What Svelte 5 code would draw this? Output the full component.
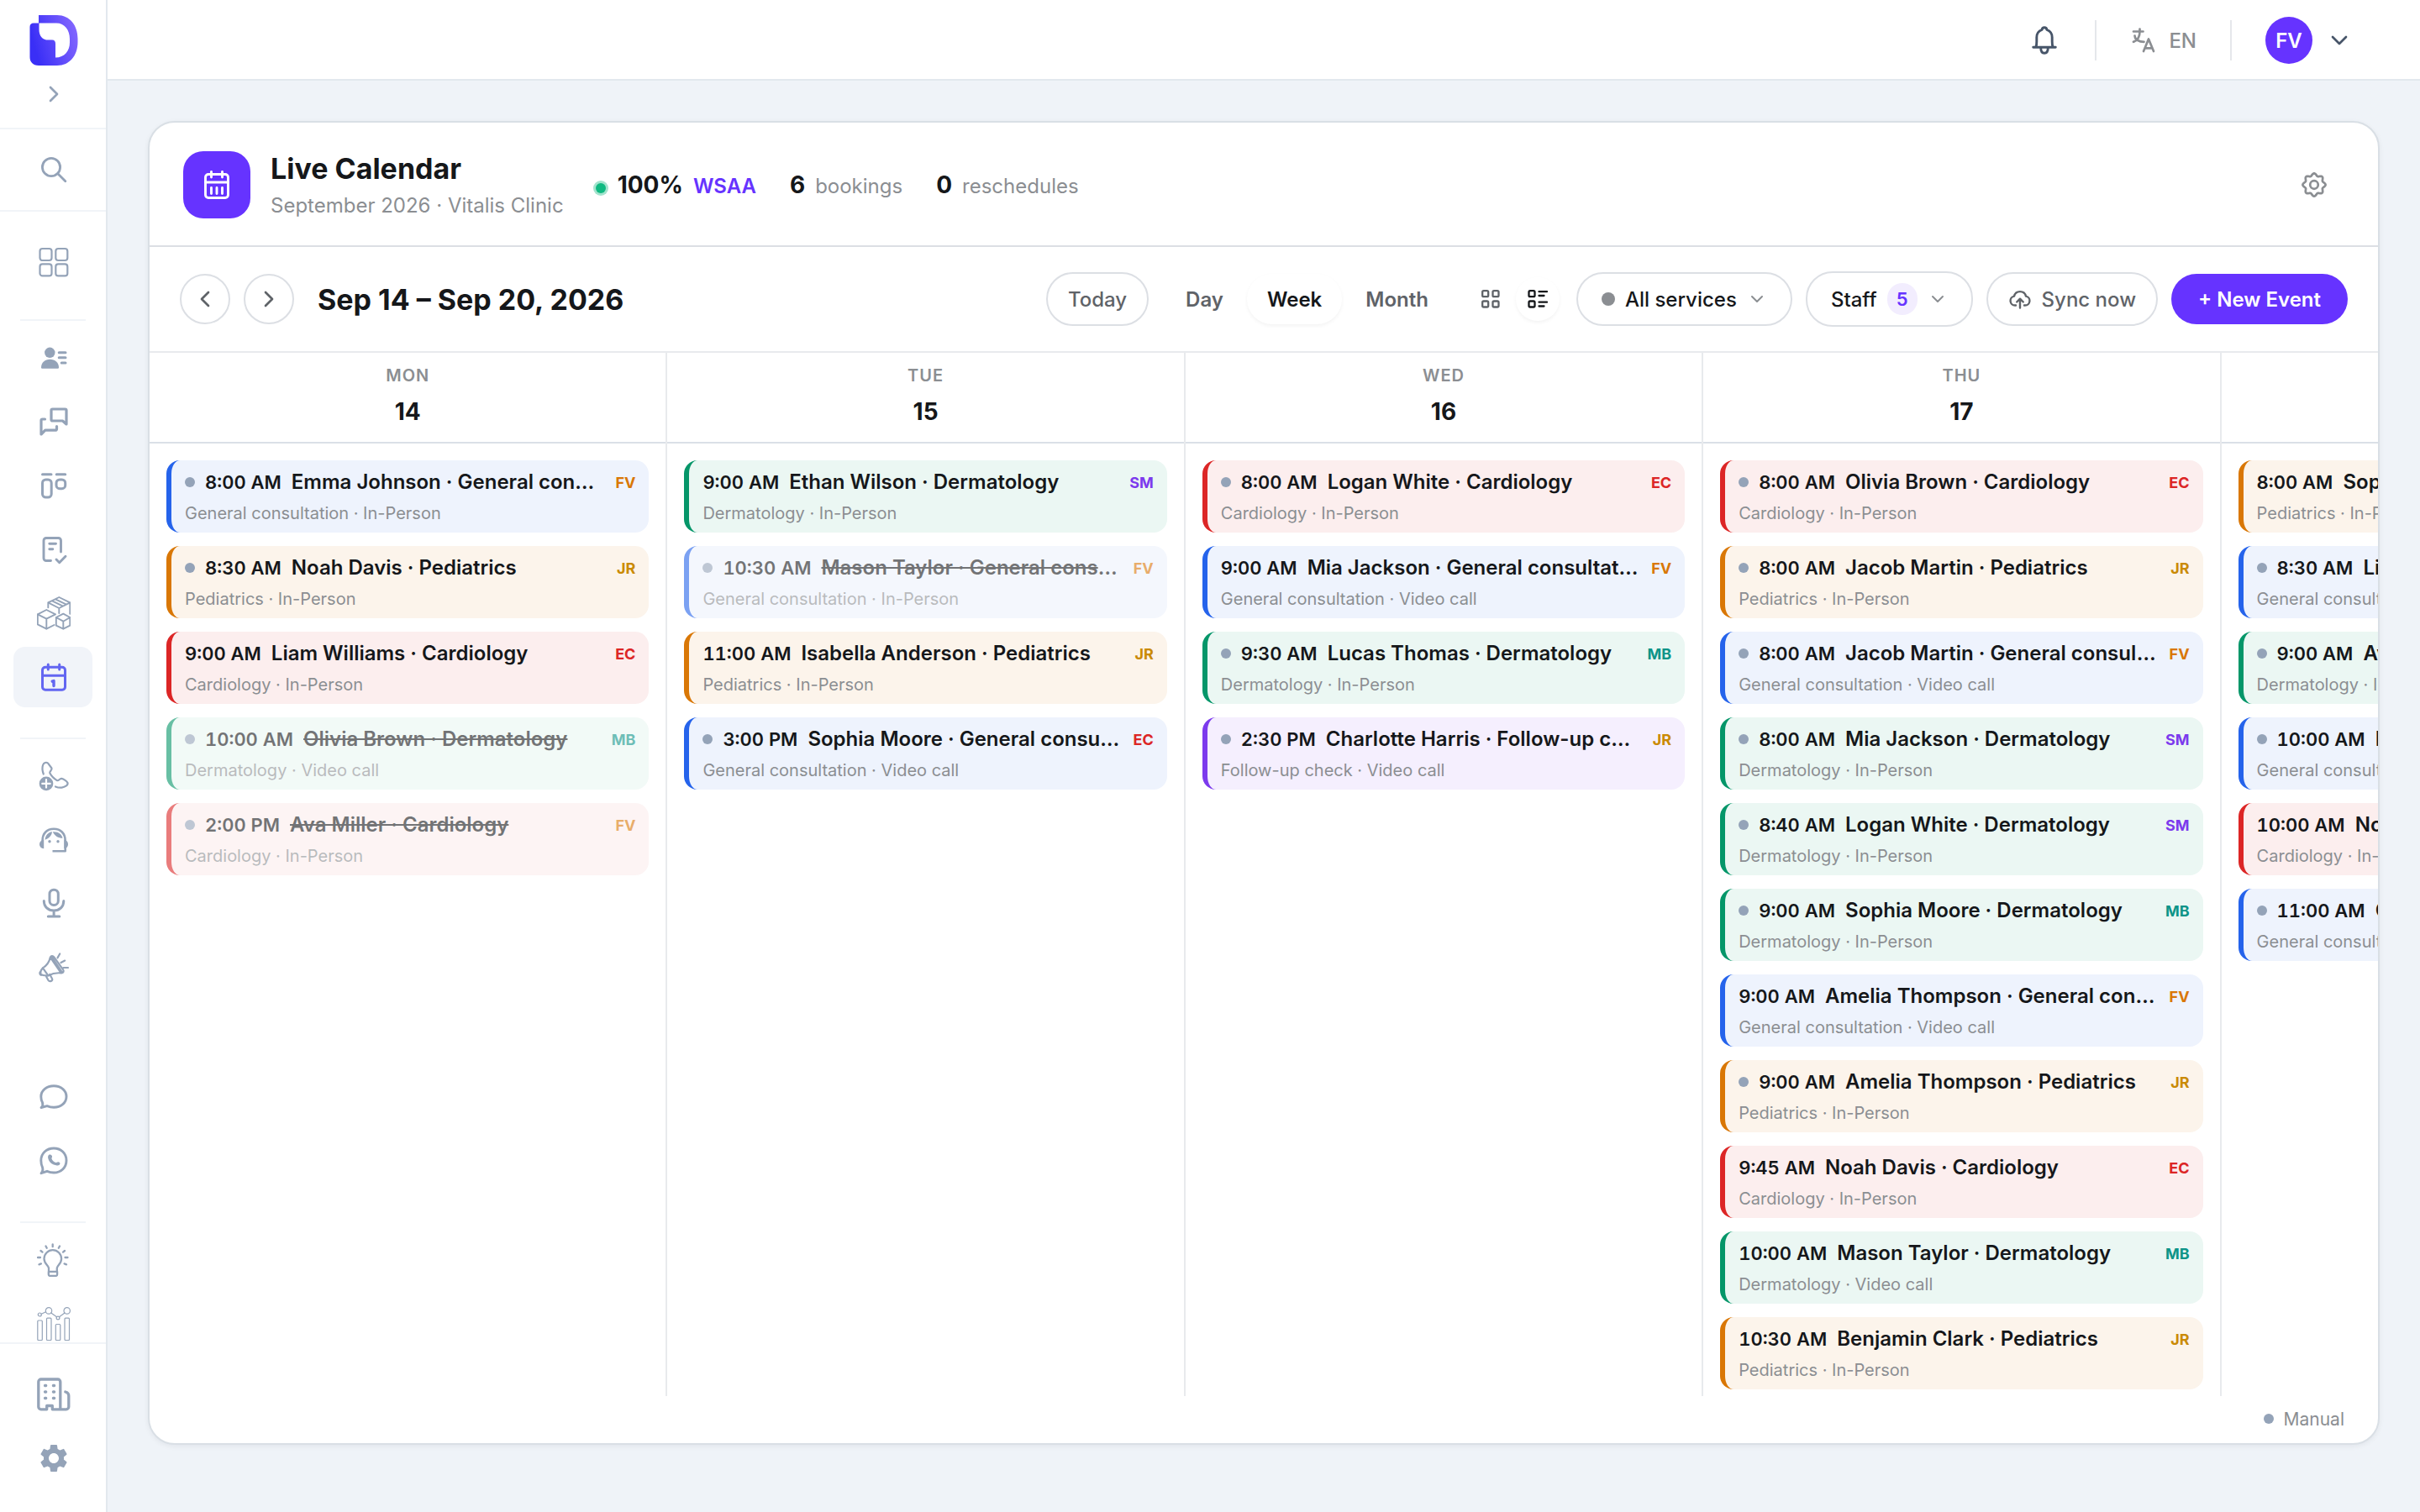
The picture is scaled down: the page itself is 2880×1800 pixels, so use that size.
<script lang="ts">
  type Service = 'general' | 'pediatrics' | 'cardiology' | 'dermatology' | 'followup';

  interface Booking {
    time: string;
    patient: string;
    service: Service;
    mode: string;
    staff: string;
    manual?: boolean;
    cancelled?: boolean;
  }

  const serviceNames: Record<Service, string> = {
    general: 'General consultation',
    pediatrics: 'Pediatrics',
    cardiology: 'Cardiology',
    dermatology: 'Dermatology',
    followup: 'Follow-up check',
  };

  const inPerson = 'In-Person';
  const video = 'Video call';

  const days: { name: string; date: number; bookings: Booking[] }[] = [
    {
      name: 'Mon',
      date: 14,
      bookings: [
        { time: '8:00 AM', patient: 'Emma Johnson', service: 'general', mode: inPerson, staff: 'FV', manual: true },
        { time: '8:30 AM', patient: 'Noah Davis', service: 'pediatrics', mode: inPerson, staff: 'JR', manual: true },
        { time: '9:00 AM', patient: 'Liam Williams', service: 'cardiology', mode: inPerson, staff: 'EC' },
        { time: '10:00 AM', patient: 'Olivia Brown', service: 'dermatology', mode: video, staff: 'MB', manual: true, cancelled: true },
        { time: '2:00 PM', patient: 'Ava Miller', service: 'cardiology', mode: inPerson, staff: 'FV', manual: true, cancelled: true },
      ],
    },
    {
      name: 'Tue',
      date: 15,
      bookings: [
        { time: '9:00 AM', patient: 'Ethan Wilson', service: 'dermatology', mode: inPerson, staff: 'SM' },
        { time: '10:30 AM', patient: 'Mason Taylor', service: 'general', mode: inPerson, staff: 'FV', manual: true, cancelled: true },
        { time: '11:00 AM', patient: 'Isabella Anderson', service: 'pediatrics', mode: inPerson, staff: 'JR' },
        { time: '3:00 PM', patient: 'Sophia Moore', service: 'general', mode: video, staff: 'EC', manual: true },
      ],
    },
    {
      name: 'Wed',
      date: 16,
      bookings: [
        { time: '8:00 AM', patient: 'Logan White', service: 'cardiology', mode: inPerson, staff: 'EC', manual: true },
        { time: '9:00 AM', patient: 'Mia Jackson', service: 'general', mode: video, staff: 'FV' },
        { time: '9:30 AM', patient: 'Lucas Thomas', service: 'dermatology', mode: inPerson, staff: 'MB', manual: true },
        { time: '2:30 PM', patient: 'Charlotte Harris', service: 'followup', mode: video, staff: 'JR', manual: true },
      ],
    },
    {
      name: 'Thu',
      date: 17,
      bookings: [
        { time: '8:00 AM', patient: 'Olivia Brown', service: 'cardiology', mode: inPerson, staff: 'EC', manual: true },
        { time: '8:00 AM', patient: 'Jacob Martin', service: 'pediatrics', mode: inPerson, staff: 'JR', manual: true },
        { time: '8:00 AM', patient: 'Jacob Martin', service: 'general', mode: video, staff: 'FV', manual: true },
        { time: '8:00 AM', patient: 'Mia Jackson', service: 'dermatology', mode: inPerson, staff: 'SM', manual: true },
        { time: '8:40 AM', patient: 'Logan White', service: 'dermatology', mode: inPerson, staff: 'SM', manual: true },
        { time: '9:00 AM', patient: 'Sophia Moore', service: 'dermatology', mode: inPerson, staff: 'MB', manual: true },
        { time: '9:00 AM', patient: 'Amelia Thompson', service: 'general', mode: video, staff: 'FV' },
        { time: '9:00 AM', patient: 'Amelia Thompson', service: 'pediatrics', mode: inPerson, staff: 'JR', manual: true },
        { time: '9:45 AM', patient: 'Noah Davis', service: 'cardiology', mode: inPerson, staff: 'EC' },
        { time: '10:00 AM', patient: 'Mason Taylor', service: 'dermatology', mode: video, staff: 'MB' },
        { time: '10:30 AM', patient: 'Benjamin Clark', service: 'pediatrics', mode: inPerson, staff: 'JR' },
      ],
    },
    {
      name: 'Fri',
      date: 18,
      bookings: [
        { time: '8:00 AM', patient: 'Sophia Moore', service: 'pediatrics', mode: inPerson, staff: 'JR' },
        { time: '8:30 AM', patient: 'Liam Williams', service: 'general', mode: inPerson, staff: 'FV', manual: true },
        { time: '9:00 AM', patient: 'Ava Miller', service: 'dermatology', mode: inPerson, staff: 'MB', manual: true },
        { time: '10:00 AM', patient: 'Isabella Anderson', service: 'general', mode: inPerson, staff: 'FV', manual: true },
        { time: '10:00 AM', patient: 'Noah Davis', service: 'cardiology', mode: inPerson, staff: 'EC' },
        { time: '11:00 AM', patient: 'Charlotte Harris', service: 'general', mode: video, staff: 'FV', manual: true },
      ],
    },
  ];

  const views = ['Day', 'Week', 'Month'];
  let view = $state('Week');
  let layout = $state('list');

  // eight soft teeth around the centre of a 40 x 40 box
  let cog = '';
  for (let a = 0; a < 360; a += 5) {
    const t = (a * Math.PI) / 180;
    const r = 12.2 + 1.4 * Math.cos(8 * t);
    cog += `${a ? 'L' : 'M'}${(20 + r * Math.cos(t)).toFixed(2)} ${(20 + r * Math.sin(t)).toFixed(2)}`;
  }
  cog += 'Z';
</script>

{#snippet dashboard()}
  <svg class="icon" viewBox="0 0 40 40" stroke-width="2.2">
    <rect x="3.5" y="4" width="14" height="14" rx="3" /><rect x="22.3" y="4" width="14" height="14" rx="3" />
    <rect x="3.5" y="22.4" width="14" height="14" rx="3" /><rect x="22.3" y="22.4" width="14" height="14" rx="3" />
  </svg>
{/snippet}

{#snippet contacts()}
  <svg class="icon" viewBox="0 0 40 40" stroke-width="3">
    <g class="solid">
      <circle cx="15.3" cy="13.8" r="6.2" />
      <path d="M5 31.5C5 25.5 9.5 21.7 15.5 21.7S26 25.5 26 31.5a1.2 1.2 0 0 1-1.2 1.2H6.2A1.2 1.2 0 0 1 5 31.5Z" />
    </g>
    <path d="M26.2 13.8h7.8M26.2 19.8h7.8M29.2 26h4.8" />
  </svg>
{/snippet}

{#snippet conversations()}
  <svg class="icon" viewBox="0 0 40 40" stroke-width="3.2">
    <path d="M18.5 5h15A1.5 1.5 0 0 1 35 6.5V23l-4.5-4h-12a1.5 1.5 0 0 1-1.5-1.5v-11A1.5 1.5 0 0 1 18.5 5Z" />
    <path d="M9.5 17h-3A1.5 1.5 0 0 0 5 18.5V35l4.8-4.8H22a1.5 1.5 0 0 0 1.5-1.5V25.5" />
  </svg>
{/snippet}

{#snippet board()}
  <svg class="icon" viewBox="0 0 40 40" stroke-width="3">
    <path d="M6.5 6.7h10.5M23.2 6.7h10.5" />
    <rect x="6.5" y="13" width="10.7" height="21" rx="4" /><rect x="23" y="13" width="10.7" height="10.7" rx="4" />
  </svg>
{/snippet}

{#snippet tasks()}
  <svg class="icon" viewBox="0 0 40 40" stroke-width="2.9">
    <path d="M16.5 33.5H11A3 3 0 0 1 8 30.5v-21a3 3 0 0 1 3-3h14.5a3 3 0 0 1 3 3V23" />
    <path d="M14.8 13.3h7.7M14.8 19.7h4M23 32l3.7 3.7 7.3-7.5" />
  </svg>
{/snippet}

{#snippet inventory()}
  <svg class="icon" viewBox="0 0 40 40" stroke-width="1.9">
    <path d="M13.3 13.3v-6l13-6.3 13 6.3v13.4M13.3 7.3l13 6.7 13-6.7M26.3 14v6M22 3.3l13 6.3M18 5.3l13 6.3" />
    <path d="M20.5 34l-9.2 4.7-10.5-5.4v-12l10.5-5.3L22 21.3l-10.7 5.4L.8 21.3M11.3 26.7v12" />
    <path d="M22.8 25l8.5-4.3 8 4.3v9.7l-8 4-8.5-4ZM22.8 25l8.5 4.7 8-4.7M31.3 29.7v9" />
  </svg>
{/snippet}

{#snippet calendar()}
  <svg class="icon" viewBox="0 0 40 40" stroke-width="3">
    <rect x="6.5" y="8.2" width="27" height="27" rx="3.5" />
    <path d="M6.5 18.3h27M13.3 5v6M26.7 5v6" /><path d="M18.2 25.2l1.8-.7v6" stroke-width="3.4" />
  </svg>
{/snippet}

{#snippet calls()}
  <svg class="icon" viewBox="0 0 40 40" stroke-width="2.2">
    <path d="M7.8 17.5C6.5 14 6 10 7 7s4-4.3 6.3-2.2L17.5 10.5c1 1.8-3 4-2.2 5.8 1.5 3 5.5 7 8.5 8.8 2 1 3-2.5 5.5-2.2 2.5.5 6.2 3 7.2 5 .8 3-3.5 5.3-7 5.7-3 .3-5.5-.3-7.5-1.2" />
    <circle class="solid" cx="11" cy="28.9" r="8.3" />
    <path class="cut" d="M11 24.2v9.4M6.3 28.9h9.4" />
  </svg>
{/snippet}

{#snippet agent()}
  <svg class="icon" viewBox="0 0 40 40" stroke-width="2.6">
    <path d="M6.5 21C6.5 12 12 6.8 20 6.8S33.7 12 33.7 21v12.2H18.5" stroke-linecap="butt" />
    <g class="solid">
      <path d="M8.2 19.5v10.7C5 30.2 3 27.8 3 25s2-5 5.2-5.5ZM32.3 19.5v10.7c3 0 4.7-2.4 4.7-5.2s-1.7-5-4.7-5.5Z" />
      <path d="M9.5 19.8c.5-5.3 3.5-9 8.5-9.6-.5 4.5-3.5 7.8-8.5 9.6ZM18.8 10.2c6.5-.5 11 3 11.7 7.6-5 0-9.5-2.6-11.7-7.6Z" />
      <circle cx="15" cy="21.7" r="1.7" /><circle cx="25" cy="21.7" r="1.7" />
    </g>
  </svg>
{/snippet}

{#snippet mic()}
  <svg class="icon" viewBox="0 0 40 40" stroke-width="3">
    <rect x="15" y="3.2" width="10.3" height="18.3" rx="5" />
    <path d="M8.3 16.5c0 7 5 11.5 11.8 11.5s11.7-4.5 11.7-11.5M20.1 28v7M13.3 35h13.5" />
  </svg>
{/snippet}

{#snippet campaigns()}
  <svg class="icon" viewBox="0 0 40 40" stroke-width="2.2">
    <path d="M15.8 7.7c1-2 3.2-2 4.5-.3l11 15.3c1.2 2-.3 4-2.6 3.7ZM15.8 7.7c-1 5-4 9.5-8.8 12.6M28.7 26.4c-6-.6-10 .2-15.4 3M7 20.3l6.3 9.1M17.5 7.2 30 25.5" />
    <path d="M7 20.3c-2 2-3.2 4.6-2.8 7.3 2.3 1.7 5.3 2.2 9.1 1.8M4.2 24.5c-1.5 1.5-1 4 .8 4.3M10.5 29.5l3 5.5c1.5 2.5 6 .5 4.5-2l-2.8-5" />
    <path d="M24.5 8.3l2.7-4.8M28.5 14l4.7-2.4M31.3 20h5.7" />
  </svg>
{/snippet}

{#snippet chat()}
  <svg class="icon" viewBox="0 0 40 40" stroke-width="2.9">
    <path d="M20 6.8c8.5 0 15 5.3 15 12.7s-6.5 12.8-15 12.8c-2.8 0-5.5-.6-8-1.7l-7 1.9c1.8-1.5 2.3-3.5 1.5-6-1.2-2-1.7-4.4-1.7-7C4.8 12.1 11.5 6.8 20 6.8Z" />
  </svg>
{/snippet}

{#snippet whatsapp()}
  <svg class="icon" viewBox="0 0 40 40" stroke-width="2.9">
    <path d="M20 5c8.5 0 15 6 15 14.5S28.5 34 20 34c-2.8 0-5.5-.6-8-1.7l-7 2.4c1.8-1.8 2.3-4.2 1.5-7-1.2-2.5-1.7-5-1.7-8.2C4.8 11 11.5 5 20 5Z" />
    <path class="solid" d="M14.2 12.8c1.3-.8 3-.2 3.7 1.3.6 1.4-.8 2.5-.4 3.4.9 2.2 2.5 3.7 4.7 4.5 1 .4 1.7-1 3.3-.7 1.8.4 2.7 1.8 1.4 3.1-1.4 1.4-4.5 1.3-7 .2-3.5-1.5-6-4.5-6.7-7.9-.3-1.6 0-3.1 1-3.9Z" />
  </svg>
{/snippet}

{#snippet tips()}
  <svg class="icon" viewBox="0 0 40 40" stroke-width="2.3">
    <path d="M14 33v-3.5c-.5-3-5.5-5.2-5.5-11a10.3 10.3 0 0 1 20.6 0c0 5.8-4.8 8-5.3 11V33M13.8 33.8h10.3v3.5c0 1-.7 1.6-1.6 1.6h-7.1c-.9 0-1.6-.6-1.6-1.6Z" />
    <path d="M18.7 1.3v2.9M10.5 3.5l1.2 2.2M27 3.5l-1.2 2.2M4.5 9l2 1.6M33 9l-2 1.6M1 17h3M33.5 17h3M2.5 25.3l2.4-.9M35 25.3l-2.4-.9" />
  </svg>
{/snippet}

{#snippet reports()}
  <svg class="icon" viewBox="0 0 40 40" stroke-width="1.2">
    <rect x=".8" y="16" width="5.5" height="23.5" rx="1" /><rect x="11.5" y="13.2" width="5.5" height="26.3" rx="1" />
    <rect x="22.3" y="20.5" width="5.5" height="19" rx="1" /><rect x="33" y="13.2" width="5.5" height="26.3" rx="1" />
    <circle cx="3.3" cy="9" r="2" /><circle cx="14" cy="4.4" r="3.7" /><circle cx="25" cy="13" r="1.9" /><circle cx="35.7" cy="4.4" r="3.7" />
    <path d="M5.2 8.2l5.4-2.4M16.8 6.9l6.7 4.9M26.5 11.7l6.5-4.8" />
  </svg>
{/snippet}

{#snippet clinic()}
  <svg class="icon" viewBox="0 0 40 40" stroke-width="3.3">
    <path d="M11.7 37.8H4.8A3 3 0 0 1 1.8 34.8V5a3 3 0 0 1 3-3h20a3 3 0 0 1 3 3v32.8H18.3V33.5h-6.6v4.3M27.8 37.8h7a3 3 0 0 0 3-3V21.5c0-2.5-1.8-4-4-4.5" />
    <path d="M9.5 9.5h1.2M19.4 9.5h1.2M9.5 17h1.2M19.4 17h1.2M9.5 24.5h1.2M19.4 24.5h1.2" />
  </svg>
{/snippet}

{#snippet settings()}
  <svg class="icon" viewBox="0 0 24 24">
    <path class="solid" d="M19.14 12.94c.04-.3.06-.61.06-.94 0-.32-.02-.64-.07-.94l2.03-1.58a.49.49 0 0 0 .12-.61l-1.92-3.32a.488.488 0 0 0-.59-.22l-2.39.96c-.5-.38-1.03-.7-1.62-.94l-.36-2.54a.484.484 0 0 0-.48-.41h-3.84c-.24 0-.43.17-.47.41l-.36 2.54c-.59.24-1.13.57-1.62.94l-2.39-.96c-.22-.08-.47 0-.59.22L2.74 8.87c-.12.21-.08.47.12.61l2.03 1.58c-.05.3-.09.63-.09.94s.02.64.07.94l-2.03 1.58a.49.49 0 0 0-.12.61l1.92 3.32c.12.22.37.29.59.22l2.39-.96c.5.38 1.03.7 1.62.94l.36 2.54c.05.24.24.41.48.41h3.84c.24 0 .44-.17.47-.41l.36-2.54c.59-.24 1.13-.56 1.62-.94l2.39.96c.22.08.47 0 .59-.22l1.92-3.32c.12-.22.07-.47-.12-.61l-2.01-1.58ZM12 15.6c-1.98 0-3.6-1.62-3.6-3.6s1.62-3.6 3.6-3.6 3.6 1.62 3.6 3.6-1.62 3.6-3.6 3.6Z" />
  </svg>
{/snippet}

{#snippet chevron()}
  <svg viewBox="0 0 24 24" stroke-width="2"><path d="M6 9l6 6 6-6" /></svg>
{/snippet}

<div class="app">
  <aside class="sidebar">
    <div class="brand">
      <svg class="logo" viewBox="0 0 58 60" role="img" aria-label="Home">
        <defs>
          <linearGradient id="brand" x1="0" x2="1" y1=".3" y2="0">
            <stop offset="0" stop-color="#3a2ff6" />
            <stop offset="1" stop-color="#8a6cff" />
          </linearGradient>
        </defs>
        <path fill="url(#brand)" fill-rule="evenodd" d="M11 0h22c15 0 24.5 12 24.5 28v4C57.5 48 48 60 33 60H11C4 60 .5 55.5 .5 50V14c0-3 1.7-4.6 4.5-4.6h6ZM11.5 9.4V17c0 8 4 12.6 11 12.6h4.5c2.8 0 4 1.8 4 4.4v16.5c11 0 17-8 17-18v-4c0-11-6-19.1-16-19.1Z" />
      </svg>
      <button class="expand" aria-label="Expand menu">{@render chevron()}</button>
    </div>
    <button class="search" aria-label="Search">
      <svg class="icon" viewBox="0 0 40 40" stroke-width="2.8"><circle cx="17" cy="17" r="10.6" /><path d="M24.8 24.8l9 9" /></svg>
    </button>

    <nav class="menu">
      <div class="group first">
        <a href="#dashboard" aria-label="Dashboard">{@render dashboard()}</a>
      </div>
      <hr />
      <div class="group">
        <a href="#contacts" aria-label="Contacts">{@render contacts()}</a>
        <a href="#conversations" aria-label="Conversations">{@render conversations()}</a>
        <a href="#board" aria-label="Board">{@render board()}</a>
        <a href="#tasks" aria-label="Tasks">{@render tasks()}</a>
        <a href="#inventory" aria-label="Inventory">{@render inventory()}</a>
        <a href="#calendar" class="active" aria-label="Calendar">{@render calendar()}</a>
      </div>
      <hr />
      <div class="group agents">
        <a href="#calls" aria-label="Calls">{@render calls()}</a>
        <a href="#agent" aria-label="Agent">{@render agent()}</a>
        <a href="#voice" aria-label="Voice">{@render mic()}</a>
        <a href="#campaigns" aria-label="Campaigns">{@render campaigns()}</a>
      </div>
      <div class="group">
        <a href="#chat" aria-label="Chat">{@render chat()}</a>
        <a href="#whatsapp" aria-label="WhatsApp">{@render whatsapp()}</a>
      </div>
      <hr />
      <div class="group">
        <a href="#tips" aria-label="Tips">{@render tips()}</a>
        <a href="#reports" aria-label="Reports">{@render reports()}</a>
      </div>
    </nav>

    <div class="menu-footer">
      <a href="#clinic" aria-label="Clinic">{@render clinic()}</a>
      <a href="#settings" aria-label="Settings">{@render settings()}</a>
    </div>
  </aside>

  <div class="page">
    <header class="topbar">
      <button class="bell" aria-label="Notifications">
        <svg class="icon" viewBox="0 0 40 40" stroke-width="2.9">
          <path d="M6.7 28.3h26.6M9.8 28c.8-1.5 1-3.5 1-6.5v-5c0-4.5 2-7.5 6.2-9C17.3 5.5 18.3 4.7 20 4.7s2.7.8 3 2.8c4.2 1.5 6.2 4.5 6.2 9v5c0 3 .2 5 1 6.5M15.7 28.5c0 4.5 1.7 6.8 4.3 6.8s4.3-2.3 4.3-6.8" />
        </svg>
      </button>
      <span class="rule"></span>
      <button class="lang">
        <svg viewBox="0 0 32 32" stroke-width="2.7">
          <path d="M4 5.5h11.5M11.5 2.5v3c0 5.5-2.5 10.5-7.5 12.3M5.5 10.5c0 4.5 5 7.3 11 7.3" />
          <path d="M16 29l6-14.5L28 29M18 25.3h8" />
        </svg>
        EN
      </button>
      <span class="rule"></span>
      <button class="account" aria-label="Account">
        <span class="avatar">FV</span>
        {@render chevron()}
      </button>
    </header>

    <main>
      <section class="card">
        <header class="card-head">
          <div class="badge">
            <svg class="icon" viewBox="0 0 40 40" stroke-width="2.9">
              <rect x="6.5" y="7.5" width="27" height="28" rx="3.5" />
              <path d="M6.5 17h27M13.5 4.5v6.5M26.5 4.5v6.5M13.5 23.5v7M20 23.5v7M26.5 23.5v7" />
            </svg>
          </div>
          <div class="heading">
            <h1>Live Calendar</h1>
            <p>September 2026 · Vitalis Clinic</p>
          </div>
          <ul class="stats">
            <li><i class="live"></i><strong>100%</strong><b>WSAA</b></li>
            <li><strong>6</strong><span>bookings</span></li>
            <li><strong>0</strong><span>reschedules</span></li>
          </ul>
          <button class="cog" aria-label="Calendar settings">
            <svg class="icon" viewBox="0 0 40 40" stroke-width="2.7"><path d={cog} /><circle cx="20" cy="20" r="4.8" /></svg>
          </button>
        </header>

        <div class="toolbar">
          <button class="step prev" aria-label="Previous week">{@render chevron()}</button>
          <button class="step next" aria-label="Next week">{@render chevron()}</button>
          <h2>Sep 14 – Sep 20, 2026</h2>
          <button class="pill">Today</button>
          <div class="segment">
            {#each views as name}
              <button class:on={view === name} onclick={() => (view = name)}>{name}</button>
            {/each}
          </div>
          <div class="segment icons">
            <button class:on={layout === 'grid'} aria-label="Grid" onclick={() => (layout = 'grid')}>
              <svg viewBox="0 0 28 28" stroke-width="2.3">
                <rect x="4.2" y="4.2" width="7" height="7" rx="1.5" /><rect x="16.5" y="4.2" width="7" height="7" rx="1.5" />
                <rect x="4.2" y="16.5" width="7" height="7" rx="1.5" /><rect x="16.5" y="16.5" width="7" height="7" rx="1.5" />
              </svg>
            </button>
            <button class:on={layout === 'list'} aria-label="List" onclick={() => (layout = 'list')}>
              <svg viewBox="0 0 28 28" stroke-width="2.3">
                <rect x="3.5" y="4.2" width="7" height="7" rx="1.5" /><rect x="3.5" y="16.5" width="7" height="7" rx="1.5" />
                <path d="M15.5 5.2h9.5M15.5 10h6M15.5 17.7h9.5M15.5 22.5h6" />
              </svg>
            </button>
          </div>
          <label class="pill dark">
            <i class="dot"></i>
            <select aria-label="Service">
              <option>All services</option>
            </select>
            {@render chevron()}
          </label>
          <button class="pill dark staff">Staff <span class="count">5</span>{@render chevron()}</button>
          <button class="pill">
            <svg viewBox="0 0 28 28" stroke-width="2.4">
              <path d="M9 21.5H8a5.5 5.5 0 0 1-1-10.9 7.2 7.2 0 0 1 14 0 5.5 5.5 0 0 1-1 10.9h-1M14 24.5V14M10.2 17.5L14 13.7l3.8 3.8" />
            </svg>
            Sync now
          </button>
          <button class="create">+ New Event</button>
        </div>

        <div class="scroller">
          <div class="week">
            {#each days as day}
              <section class="day">
                <header>
                  <span>{day.name}</span>
                  <b>{day.date}</b>
                </header>
                <div class="bookings">
                  {#each day.bookings as b}
                    <article class={`booking ${b.service}`} class:cancelled={b.cancelled}>
                      <div class="line">
                        {#if b.manual}<i class="dot"></i>{/if}
                        <time>{b.time}</time>
                        <span class="title">{b.patient} · {serviceNames[b.service]}</span>
                        <span class={`initials ${b.staff.toLowerCase()}`}>{b.staff}</span>
                      </div>
                      <p>{serviceNames[b.service]} · {b.mode}</p>
                    </article>
                  {/each}
                </div>
              </section>
            {/each}
          </div>
        </div>

        <footer class="legend"><i class="dot"></i>Manual</footer>
      </section>
    </main>
  </div>
</div>

<style>
  :global(body) {
    margin: 0;
    font-family: Inter, 'Liberation Sans', sans-serif;
    color: #15171a;
    background: #eff3f8;
  }
  * {
    box-sizing: border-box;
  }
  button,
  select {
    font: inherit;
    color: inherit;
    background: none;
    border: 0;
    padding: 0;
  }
  h1,
  h2,
  p,
  ul {
    margin: 0;
    padding: 0;
  }
  svg {
    display: block;
    flex: none;
    fill: none;
    stroke: currentColor;
    stroke-linecap: round;
    stroke-linejoin: round;
  }
  .icon {
    width: 40px;
    height: 40px;
  }
  .solid {
    fill: currentColor;
    stroke: none;
  }
  .cut {
    stroke: #fff;
  }
  .app {
    display: flex;
    height: 100vh;
  }

  /* sidebar */
  .sidebar {
    flex: none;
    width: 128px;
    display: flex;
    flex-direction: column;
    background: #fff;
    border-right: 2px solid #e2e8ee;
    color: #94a3b8;
  }
  .brand {
    display: flex;
    flex-direction: column;
    align-items: center;
    gap: 18px;
    height: 154px;
    padding: 18px 0 0 2px;
    border-bottom: 2px solid #f1f4f8;
  }
  .logo {
    width: 58px;
    height: 60px;
    stroke: none;
  }
  .expand svg {
    width: 32px;
    height: 32px;
    transform: rotate(-90deg);
  }
  .search {
    display: grid;
    place-items: center;
    height: 98px;
    padding-left: 2px;
    border-bottom: 2px solid #f1f4f8;
  }
  .menu {
    flex: 1;
    min-height: 0;
    overflow: hidden;
    padding: 24px 16px 0;
  }
  .group {
    display: flex;
    flex-direction: column;
    gap: 4px;
    margin-bottom: 36px;
  }
  .group.first {
    margin-bottom: 32px;
  }
  .group.agents {
    margin-bottom: 82px;
  }
  hr {
    height: 2px;
    margin: 0 8px 8px;
    border: 0;
    background: #f1f4f8;
  }
  .sidebar a {
    display: grid;
    place-items: center;
    height: 72px;
    padding-left: 2px;
    border-radius: 14px;
    color: inherit;
  }
  .sidebar a.active {
    background: #f1f4f9;
    color: #6366f1;
  }
  .menu-footer {
    display: flex;
    flex-direction: column;
    gap: 4px;
    padding: 24px 16px 28px;
    border-top: 2px solid #f1f4f8;
  }

  /* top bar */
  .page {
    flex: 1;
    min-width: 0;
    display: flex;
    flex-direction: column;
  }
  .topbar {
    display: flex;
    align-items: center;
    justify-content: flex-end;
    gap: 40px;
    height: 96px;
    padding: 2px 80px 0 0;
    background: #fff;
    border-bottom: 2px solid #e2e8ee;
  }
  .rule {
    width: 2px;
    height: 48px;
    background: #e5e7eb;
  }
  .bell {
    color: #475569;
  }
  .lang {
    display: flex;
    align-items: center;
    gap: 14px;
    font-size: 24px;
    font-weight: 500;
    color: #8b8e92;
  }
  .lang svg {
    width: 32px;
    height: 32px;
  }
  .account {
    display: flex;
    align-items: center;
    gap: 16px;
    color: #475569;
  }
  .account svg {
    width: 32px;
    height: 32px;
  }
  .avatar {
    display: grid;
    place-items: center;
    width: 56px;
    height: 56px;
    border-radius: 50%;
    background: #6633ff;
    color: #fff;
    font-size: 24px;
    font-weight: 600;
  }

  /* card */
  main {
    flex: 1;
    min-height: 0;
    padding: 48px 48px 80px;
  }
  .card {
    display: flex;
    flex-direction: column;
    height: 100%;
    overflow: hidden;
    background: #fff;
    border: 2px solid #d9dfe5;
    border-radius: 32px;
    box-shadow: 0 2px 6px rgba(15, 23, 42, 0.06);
  }
  .card-head {
    display: flex;
    align-items: center;
    height: 148px;
    padding: 2px 40px 0;
    border-bottom: 2px solid #dcdfe4;
  }
  .badge {
    display: grid;
    place-items: center;
    width: 80px;
    height: 80px;
    margin-right: 24px;
    border-radius: 24px;
    background: #6633ff;
    color: #fff;
  }
  .heading {
    padding-top: 2px;
  }
  h1 {
    font-size: 34px;
    line-height: 44px;
    font-weight: 700;
  }
  .heading p {
    margin-top: 4px;
    font-size: 24px;
    line-height: 36px;
    color: #8b8e92;
  }
  .stats {
    display: flex;
    gap: 40px;
    margin-left: 38px;
    padding-top: 2px;
    list-style: none;
  }
  .stats li {
    display: flex;
    align-items: baseline;
    gap: 12px;
    font-size: 24px;
    line-height: 36px;
    color: #8b8e92;
  }
  .stats strong {
    font-size: 28px;
    font-weight: 700;
    color: #15171a;
  }
  .stats b {
    font-weight: 600;
    color: #6633ff;
  }
  .live {
    width: 12px;
    height: 12px;
    margin-right: 2px;
    border-radius: 50%;
    background: #10b981;
    box-shadow: 0 0 0 3px #a3e3cd;
  }
  .cog {
    display: grid;
    place-items: center;
    width: 72px;
    height: 72px;
    margin-left: auto;
    color: #8b8e92;
  }

  /* toolbar */
  .toolbar {
    display: flex;
    align-items: center;
    gap: 16px;
    height: 126px;
    padding: 0 36px;
    border-bottom: 2px solid #e8eaed;
    color: #5f6368;
    font-size: 24px;
    white-space: nowrap;
  }
  .toolbar h2 {
    flex: 1;
    margin-left: 12px;
    font-size: 34px;
    font-weight: 700;
    color: #15171a;
  }
  .step {
    display: grid;
    place-items: center;
    width: 60px;
    height: 60px;
    border: 2px solid #dcdfe4;
    border-radius: 50%;
  }
  .step svg {
    width: 32px;
    height: 32px;
  }
  .prev svg {
    transform: rotate(90deg);
  }
  .next svg {
    transform: rotate(-90deg);
  }
  .pill {
    display: flex;
    align-items: center;
    gap: 12px;
    height: 64px;
    padding: 0 24px;
    border: 2px solid #dcdfe4;
    border-radius: 32px;
    font-weight: 500;
  }
  .pill svg {
    width: 28px;
    height: 28px;
  }
  .pill.dark {
    padding: 0 28px;
    color: #15171a;
  }
  .pill.dark select {
    appearance: none;
  }
  .pill.dark svg {
    width: 24px;
    height: 24px;
    color: #8b8e92;
  }
  .pill.dark .dot {
    width: 16px;
    height: 16px;
    background: #8b8e92;
  }
  .pill.staff {
    height: 66px;
  }
  .count {
    display: grid;
    place-items: center;
    width: 36px;
    height: 38px;
    border-radius: 20px;
    background: #f2edfe;
    color: #6633ff;
    font-size: 22px;
    font-weight: 600;
  }
  .create {
    height: 60px;
    padding: 0 32px;
    border-radius: 30px;
    background: #6633ff;
    color: #fff;
    font-weight: 600;
  }
  .segment {
    display: flex;
    gap: 4px;
    padding: 4px;
  }
  .segment button {
    display: grid;
    place-items: center;
    height: 60px;
    padding: 0 24px;
    border-radius: 30px;
    font-weight: 600;
  }
  .segment .on {
    color: #15171a;
    box-shadow: 0 2px 4px rgba(0, 0, 0, 0.05);
  }
  .segment.icons button {
    width: 52px;
    height: 52px;
    padding: 0;
  }
  .segment svg {
    width: 28px;
    height: 28px;
  }

  /* week */
  .scroller {
    flex: 1;
    min-height: 0;
    overflow: hidden;
  }
  .week {
    display: grid;
    grid-template-columns: repeat(5, 1fr);
    min-width: 3082px;
    min-height: 100%;
  }
  .day {
    min-width: 0;
    border-right: 2px solid #e8eaed;
  }
  .day header {
    display: flex;
    flex-direction: column;
    align-items: center;
    gap: 8px;
    height: 108px;
    padding-top: 12px;
    border-bottom: 2px solid #dae0e7;
  }
  .day header span {
    font-size: 20px;
    line-height: 30px;
    font-weight: 600;
    letter-spacing: 1px;
    text-transform: uppercase;
    color: #8b8e92;
  }
  .day header b {
    font-size: 28px;
    line-height: 40px;
    font-weight: 700;
  }
  .bookings {
    display: flex;
    flex-direction: column;
    gap: 16px;
    padding: 20px;
  }
  .booking {
    --tone: #2563eb;
    height: 86px;
    padding: 12px 16px 0;
    border-left: 6px solid var(--tone);
    border-radius: 16px;
    background: color-mix(in srgb, var(--tone) 8%, #fff);
  }
  .pediatrics {
    --tone: #d97706;
  }
  .cardiology {
    --tone: #dc2626;
  }
  .dermatology {
    --tone: #059669;
  }
  .followup {
    --tone: #7c3aed;
  }
  .cancelled {
    opacity: 0.6;
  }
  .cancelled .title {
    text-decoration: line-through;
  }
  .line {
    display: flex;
    align-items: center;
    gap: 12px;
    height: 28px;
    white-space: nowrap;
  }
  .dot {
    flex: none;
    width: 12px;
    height: 12px;
    border-radius: 50%;
    background: #94a3b8;
  }
  time {
    font-size: 22px;
    font-weight: 600;
    font-variant-numeric: tabular-nums;
  }
  .title {
    flex: 1;
    overflow: hidden;
    text-overflow: ellipsis;
    font-size: 24px;
    line-height: 32px;
    font-weight: 600;
  }
  .initials {
    margin-left: 2px;
    font-size: 18px;
    font-weight: 700;
  }
  .fv {
    color: #d97706;
  }
  .jr {
    color: #ca8a04;
  }
  .ec {
    color: #dc2626;
  }
  .mb {
    color: #0d9488;
  }
  .sm {
    color: #7c3aed;
  }
  .booking p {
    margin-top: 8px;
    font-size: 20px;
    line-height: 30px;
    color: #8b8e92;
  }
  .legend {
    display: flex;
    align-items: center;
    justify-content: flex-end;
    gap: 12px;
    height: 56px;
    padding: 0 40px 2px 0;
    font-size: 21px;
    color: #8b8e92;
  }
</style>
